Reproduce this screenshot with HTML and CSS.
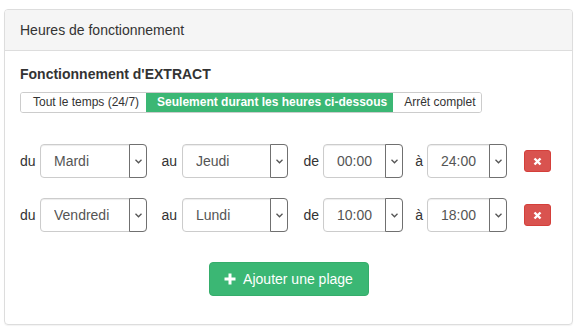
FILE: index.html
```html
<html>
    <head>
        <meta charset="utf-8">
        <link rel="stylesheet" href="styles.css">
    </head>
    <body>
        <div class="panel">
            <div class="panel-heading">Heures de fonctionnement</div>
            <div class="panel-body">
                <div class="mode-title">Fonctionnement d'EXTRACT</div>
                <div class="mode-switch">
                    <button class="mode">Tout le temps (24/7)</button>
                    <button class="mode active">Seulement durant les heures ci-dessous</button>
                    <button class="mode">Arrêt complet</button>
                </div>

                <div class="range-list">
                    <div class="range">
                        <div class="field f-from">
                            <span class="lbl">du</span>
                            <div class="select day"><select><option>Mardi</option></select><span class="caret"><svg width="7" height="5" viewBox="0 0 7 5"><path d="M0.5 0.8 L3.5 3.8 L6.5 0.8" fill="none" stroke="#555" stroke-width="1.3"/></svg></span></div>
                        </div>
                        <div class="field f-to">
                            <span class="lbl">au</span>
                            <div class="select day"><select><option>Jeudi</option></select><span class="caret"><svg width="7" height="5" viewBox="0 0 7 5"><path d="M0.5 0.8 L3.5 3.8 L6.5 0.8" fill="none" stroke="#555" stroke-width="1.3"/></svg></span></div>
                        </div>
                        <div class="field f-start">
                            <span class="lbl">de</span>
                            <div class="select hour"><select><option>00:00</option></select><span class="caret"><svg width="7" height="5" viewBox="0 0 7 5"><path d="M0.5 0.8 L3.5 3.8 L6.5 0.8" fill="none" stroke="#555" stroke-width="1.3"/></svg></span></div>
                        </div>
                        <div class="field f-end">
                            <span class="lbl">à</span>
                            <div class="select hour"><select><option>24:00</option></select><span class="caret"><svg width="7" height="5" viewBox="0 0 7 5"><path d="M0.5 0.8 L3.5 3.8 L6.5 0.8" fill="none" stroke="#555" stroke-width="1.3"/></svg></span></div>
                        </div>
                        <button class="btn-remove"><svg width="9" height="9" viewBox="0 0 9 9"><path d="M1.5 1.5 L7.5 7.5 M7.5 1.5 L1.5 7.5" stroke="#fff" stroke-width="2.4"/></svg></button>
                    </div>
                    <div class="range">
                        <div class="field f-from">
                            <span class="lbl">du</span>
                            <div class="select day"><select><option>Vendredi</option></select><span class="caret"><svg width="7" height="5" viewBox="0 0 7 5"><path d="M0.5 0.8 L3.5 3.8 L6.5 0.8" fill="none" stroke="#555" stroke-width="1.3"/></svg></span></div>
                        </div>
                        <div class="field f-to">
                            <span class="lbl">au</span>
                            <div class="select day"><select><option>Lundi</option></select><span class="caret"><svg width="7" height="5" viewBox="0 0 7 5"><path d="M0.5 0.8 L3.5 3.8 L6.5 0.8" fill="none" stroke="#555" stroke-width="1.3"/></svg></span></div>
                        </div>
                        <div class="field f-start">
                            <span class="lbl">de</span>
                            <div class="select hour"><select><option>10:00</option></select><span class="caret"><svg width="7" height="5" viewBox="0 0 7 5"><path d="M0.5 0.8 L3.5 3.8 L6.5 0.8" fill="none" stroke="#555" stroke-width="1.3"/></svg></span></div>
                        </div>
                        <div class="field f-end">
                            <span class="lbl">à</span>
                            <div class="select hour"><select><option>18:00</option></select><span class="caret"><svg width="7" height="5" viewBox="0 0 7 5"><path d="M0.5 0.8 L3.5 3.8 L6.5 0.8" fill="none" stroke="#555" stroke-width="1.3"/></svg></span></div>
                        </div>
                        <button class="btn-remove"><svg width="9" height="9" viewBox="0 0 9 9"><path d="M1.5 1.5 L7.5 7.5 M7.5 1.5 L1.5 7.5" stroke="#fff" stroke-width="2.4"/></svg></button>
                    </div>
                </div>

                <div class="add-row">
                    <button class="btn-add"><svg width="12" height="12" viewBox="0 0 12 12"><path d="M6 0.5 V11.5 M0.5 6 H11.5" stroke="#fff" stroke-width="3"/></svg>Ajouter une plage</button>
                </div>
            </div>
        </div>
    </body>
</html>
```

FILE: styles.css
```css
body {
    margin: 0;
    padding: 9px 8px 0 4px;
    font-family: "Liberation Sans", Arial, sans-serif;
    font-size: 14px;
    color: #333;
    background: #fff;
}
.panel {
    border: 1px solid #ddd;
    border-radius: 4px;
    box-shadow: 0 1px 1px rgba(0, 0, 0, 0.05);
    height: 316px;
    box-sizing: border-box;
}
.panel-heading {
    background: #f5f5f5;
    border-bottom: 1px solid #ddd;
    border-radius: 3px 3px 0 0;
    padding: 10px 15px;
    line-height: 20px;
}
.panel-body {
    padding: 13px 15px 0 15px;
}
.mode-title {
    font-weight: bold;
    line-height: 20px;
    margin-bottom: 8px;
}
.mode-switch {
    display: inline-flex;
    height: 21px;
    border: 1px solid #ccc;
    border-radius: 3px;
    box-sizing: border-box;
    overflow: hidden;
}
.mode {
    font-family: inherit;
    font-size: 12px;
    color: #333;
    background: #fff;
    border: none;
    padding: 0 7px 0 12px;
    line-height: 19px;
    margin: 0;
}
.mode.active {
    background: #3bb774;
    color: #fff;
    font-weight: bold;
    padding: 0 6px 0 11px;
}
.mode:last-child {
    padding: 0 5px 0 11px;
}
.range-list {
    margin-top: 31px;
    display: flex;
    flex-direction: column;
    gap: 20px;
}
.range {
    display: flex;
    align-items: center;
    height: 34px;
}
.field {
    display: flex;
    align-items: center;
}
.lbl {
    text-align: right;
    padding-right: 5px;
    box-sizing: border-box;
}
.f-from .lbl { width: 20px; text-align: left; }
.f-to .lbl { width: 35px; }
.f-start .lbl { width: 35px; padding-right: 4px; }
.f-end .lbl { width: 24px; padding-right: 4px; }
.select {
    display: flex;
    height: 34px;
    border: 1px solid #ccc;
    border-radius: 4px;
    box-sizing: border-box;
    box-shadow: inset 0 1px 1px rgba(0, 0, 0, 0.075);
}
.select.day { width: 107px; }
.f-to .select.day { width: 106px; }
.select.hour { width: 80px; }
.select select {
    appearance: none;
    -webkit-appearance: none;
    border: none;
    background: transparent;
    font-family: inherit;
    font-size: 14px;
    color: #555;
    padding: 0 0 0 13px;
    flex: 1;
    min-width: 0;
    outline: none;
}
.caret {
    width: 16px;
    margin: -1px -1px -1px 0;
    border: 1px solid #707070;
    border-radius: 0 4px 4px 0;
    display: flex;
    align-items: center;
    justify-content: center;
    background: #fff;
}
.btn-remove {
    margin-left: 17px;
    width: 27px;
    height: 22px;
    background: #d9534f;
    border: 1px solid #d43f3a;
    border-radius: 3px;
    display: flex;
    align-items: center;
    justify-content: center;
    padding: 0;
}
.add-row {
    margin-top: 30px;
    display: flex;
    justify-content: center;
}
.btn-add {
    width: 160px;
    height: 34px;
    background: #3bb774;
    border: 1px solid #35ad6b;
    border-radius: 4px;
    color: #fff;
    font-family: inherit;
    font-size: 14px;
    display: flex;
    align-items: center;
    justify-content: center;
    gap: 7px;
    padding: 0;
}
```
